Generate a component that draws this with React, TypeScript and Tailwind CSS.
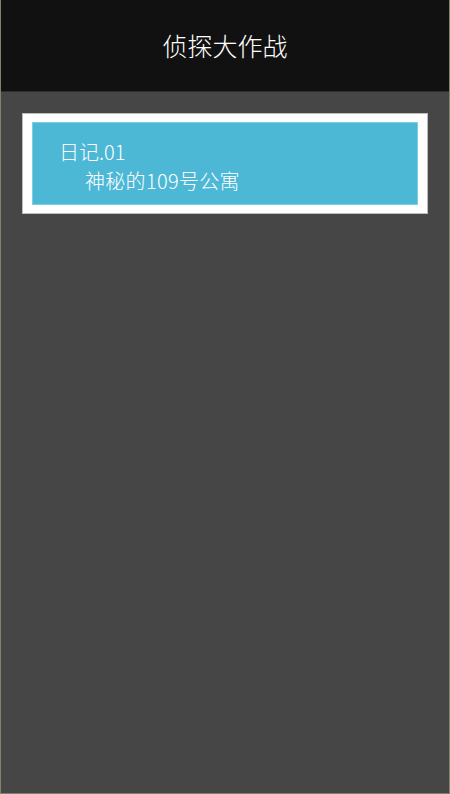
const font = { fontFamily: '"Noto Sans CJK SC", "Noto Sans", sans-serif' }

const App = () => {
  return (
    <div className="h-[794px] bg-[#7f8562] px-px pb-px" style={font}>
      <div className="flex h-full flex-col bg-[#464646]">
        <header className="flex h-[92px] items-center justify-center border-b border-[#2e2e2e] bg-[#111111]">
          <h1 className="text-[25px] font-light leading-none text-white">侦探大作战</h1>
        </header>
        <main className="px-[21px] pt-[21px]">
          <div className="border border-[#bdbdbd] bg-white px-[9px] py-[8px]">
            <div className="border border-[#7fcde3] bg-[#4db8d6] pb-[9px] pl-[26px] pt-[14px] text-[20px] font-light leading-[29px] text-white">
              <p>日记.01</p>
              <p className="pl-[26px] tracking-[0.3px]">神秘的109号公寓</p>
            </div>
          </div>
        </main>
      </div>
    </div>
  )
}

export default App
